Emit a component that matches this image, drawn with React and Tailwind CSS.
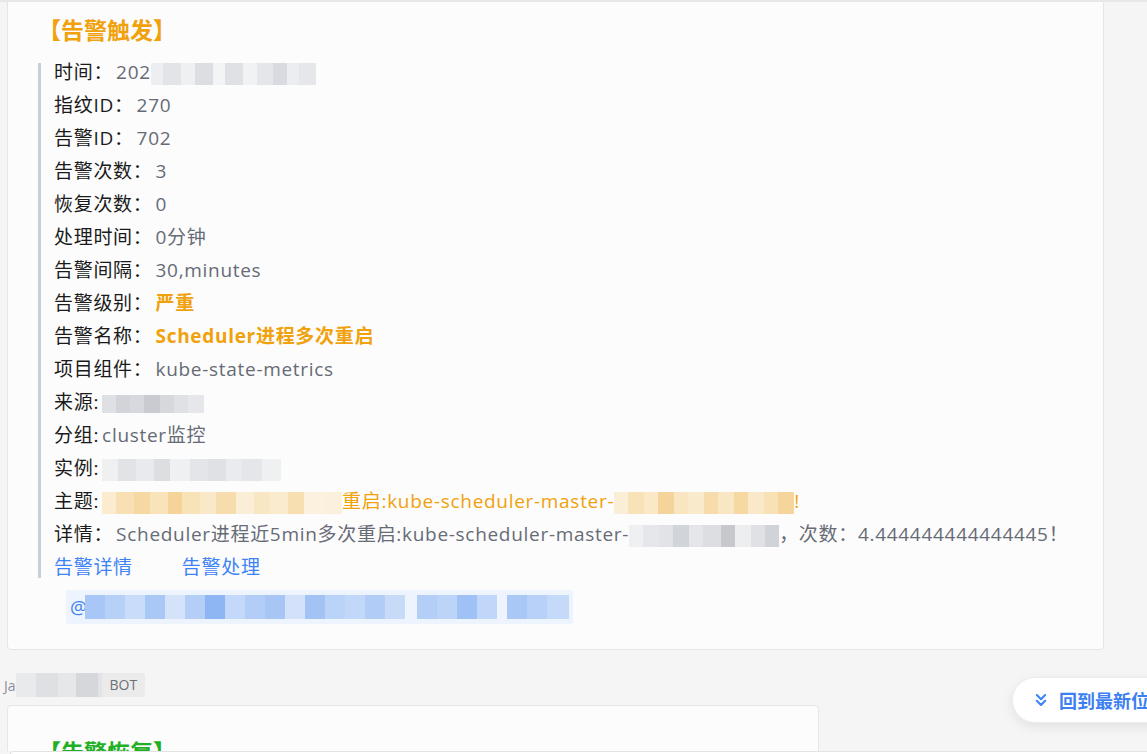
import { ChevronsDown } from "lucide-react";

// pixelated "mosaic" blocks standing in for redacted text
const Blur = ({ cells, h = "h-[22px]" }) => (
  <span className={`inline-flex align-middle ${h}`}>
    {cells.map(([w, c], i) => (
      <span key={i} style={{ width: w, background: c }} className="h-full" />
    ))}
  </span>
);

const greyA = [
  [12, "#eceef1"], [18, "#e2e4e8"], [14, "#eef0f2"], [18, "#dcdee3"], [12, "#f3f4f5"],
  [18, "#dfe1e5"], [14, "#f1f2f3"], [16, "#e4e6ea"], [14, "#d9dbe0"], [12, "#ebedf0"], [17, "#e5e7eb"],
];
const greySrc = [[14, "#dfe0e4"], [14, "#d2d4d9"], [14, "#d8d9de"], [16, "#c9cbd0"], [14, "#d6d8dc"], [14, "#e0e1e5"], [16, "#e6e7ea"]];
const greyInst = [
  [16, "#eef0f2"], [18, "#e1e3e7"], [18, "#e8eaed"], [16, "#dcdee2"], [20, "#eff0f2"],
  [18, "#e3e5e8"], [18, "#dfe1e5"], [16, "#e9ebee"], [20, "#e4e6e9"], [19, "#eef0f2"],
];
const orangeA = [
  [14, "#fbecd0"], [18, "#f8e0b4"], [16, "#f6d8a2"], [18, "#f9e3bb"], [14, "#f5d49a"], [18, "#f8e2b7"],
  [16, "#fae9c9"], [20, "#f7ddae"], [18, "#fbeed6"], [16, "#f9e6c2"], [18, "#faebcf"], [16, "#f7dfb2"],
  [20, "#fcf1de"], [18, "#fbf0dc"],
];
const orangeB = [
  [14, "#fbeed6"], [16, "#f8e2b8"], [14, "#fae8c6"], [16, "#f5d49b"], [14, "#f9e5c0"], [16, "#faeacc"],
  [14, "#f7dcab"], [16, "#f9e7c4"], [14, "#f6d8a3"], [16, "#fae9c9"], [14, "#f8e1b5"], [16, "#f5d59c"],
];
const greyDetail = [[14, "#eff0f2"], [16, "#e6e7ea"], [14, "#e1e3e6"], [16, "#d1d4d9"], [14, "#e4e6e9"], [18, "#dcdee2"], [14, "#c6c8cd"], [16, "#eceef0"], [14, "#dfe1e4"], [14, "#d0d3d8"]];
const blueA = [
  [20, "#a8c7f6"], [20, "#b6d0f7"], [20, "#c9dcf9"], [20, "#a9c8f6"], [20, "#d4e3fa"], [20, "#b3cef7"],
  [20, "#8db6f3"], [20, "#c4d9f9"], [20, "#b2cdf7"], [20, "#a7c6f5"], [20, "#d3e2fa"], [20, "#a3c3f5"],
  [20, "#bad3f8"], [20, "#c2d8f9"], [20, "#b0ccf7"], [20, "#c7dbf9"], [12, "#eef4fd"], [20, "#b4cff7"],
  [20, "#bcd4f8"], [20, "#9fc1f5"], [20, "#c1d7f9"], [10, "#eef4fd"], [20, "#a9c8f6"], [20, "#b7d1f8"], [22, "#c5daf9"],
];

const Row = ({ label, children }) => (
  <div className="whitespace-nowrap">
    <span className="text-[#1a1a1a]">{label}</span>
    <span className="pl-[3px]">{children}</span>
  </div>
);

export default function App() {
  return (
    <div className="h-[754px] w-[1147px] overflow-hidden bg-[#f5f5f5] flex flex-col relative font-['Open_Sans','Noto_Sans_CJK_SC',sans-serif]">
      <div className="h-[2px] shrink-0 bg-[#e8e8e8]" />
      <div className="flex-1 overflow-hidden">
        {/* alert card */}
        <div className="-mt-[20px] ml-[7px] w-[1097px] rounded-[4px] border border-[#e6e6e6] bg-[#fcfcfc] pl-[30px] pt-[30px] pb-[25px]">
          <div className="text-[23px] leading-[32px] font-bold text-[#f0a10b] font-['Noto_Sans_CJK_SC',sans-serif]">【告警触发】</div>
          <div className="relative mt-[11px] pl-[16px] text-[19px] leading-[33px] tracking-[0.7px] text-[#666b76] before:absolute before:left-0 before:top-[7px] before:bottom-[6px] before:w-[3px] before:bg-[#c9ced7]">
            <Row label="时间：">
              <span>202</span>
              <Blur cells={greyA} />
            </Row>
            <Row label="指纹ID：">270</Row>
            <Row label="告警ID：">702</Row>
            <Row label="告警次数：">3</Row>
            <Row label="恢复次数：">0</Row>
            <Row label="处理时间：">0分钟</Row>
            <Row label="告警间隔：">30,minutes</Row>
            <Row label="告警级别：">
              <span className="font-bold text-[#f0a10b]">严重</span>
            </Row>
            <Row label="告警名称：">
              <span className="font-bold text-[#f0a10b]">Scheduler进程多次重启</span>
            </Row>
            <Row label="项目组件：">kube-state-metrics</Row>
            <Row label="来源:">
              <Blur cells={greySrc} h="h-[18px]" />
            </Row>
            <Row label="分组:">cluster监控</Row>
            <Row label="实例:">
              <Blur cells={greyInst} />
            </Row>
            <Row label="主题:">
              <Blur cells={orangeA} />
              <span className="text-[#f0a10b]">
                重启:kube-scheduler-master-
                <Blur cells={orangeB} />!
              </span>
            </Row>
            <Row label="详情：">
              Scheduler进程近5min多次重启:kube-scheduler-master-
              <Blur cells={greyDetail} />
              ，次数：4.444444444444445！
            </Row>
            <div className="flex gap-[49px] text-[#3d83f6]">
              <span>告警详情</span>
              <span>告警处理</span>
            </div>
          </div>
          <div className="mt-[6px] ml-[28px] inline-flex h-[34px] items-center rounded-[3px] bg-[#eef4fd] pl-[4px] pr-[4px] text-[19px] text-[#3d83f6]">
            <span className="mr-[-2px]">@</span>
            <Blur cells={blueA} h="h-[24px]" />
          </div>
        </div>

        {/* sender line */}
        <div className="mt-[23px] flex h-[24px] items-center">
          <span className="pl-[4px] text-[14px] text-[#8a8f99]">Ja</span>
          <Blur
            cells={[[20, "#e9eaec"], [22, "#dfe0e3"], [18, "#e6e7e9"], [22, "#d6d7db"], [16, "#e2e3e6"]]}
            h="h-[24px]"
          />
          <span className="ml-[-12px] rounded-[3px] bg-[#ebebeb] px-[8px] text-[14px] leading-[24px] text-[#6b6f78]">
            BOT
          </span>
        </div>

        {/* recovery card */}
        <div className="mt-[8px] ml-[7px] w-[812px] rounded-[4px] border border-[#e6e6e6] bg-[#fcfcfc] pl-[30px] pt-[29px]">
          <div className="text-[23px] leading-[32px] font-bold text-[#1fb025] font-['Noto_Sans_CJK_SC',sans-serif]">【告警恢复】</div>
        </div>
      </div>
      <div className="ml-[10px] h-[3px] shrink-0 rounded-tl-[6px] border-l border-t border-[#e3e3e3] bg-white" />

      {/* back to latest */}
      <div className="absolute left-[1012px] top-[677px] flex h-[46px] w-[180px] items-center rounded-full border border-[#ececec] bg-white pl-[18px] shadow-[0_4px_12px_rgba(0,0,0,0.08)]">
        <ChevronsDown className="h-[20px] w-[20px] text-[#3d83f6]" strokeWidth={2.5} />
        <span className="ml-[8px] text-[18px] font-bold text-[#3d7ff2] font-['Noto_Sans_CJK_SC',sans-serif]">回到最新位置</span>
      </div>
    </div>
  );
}
